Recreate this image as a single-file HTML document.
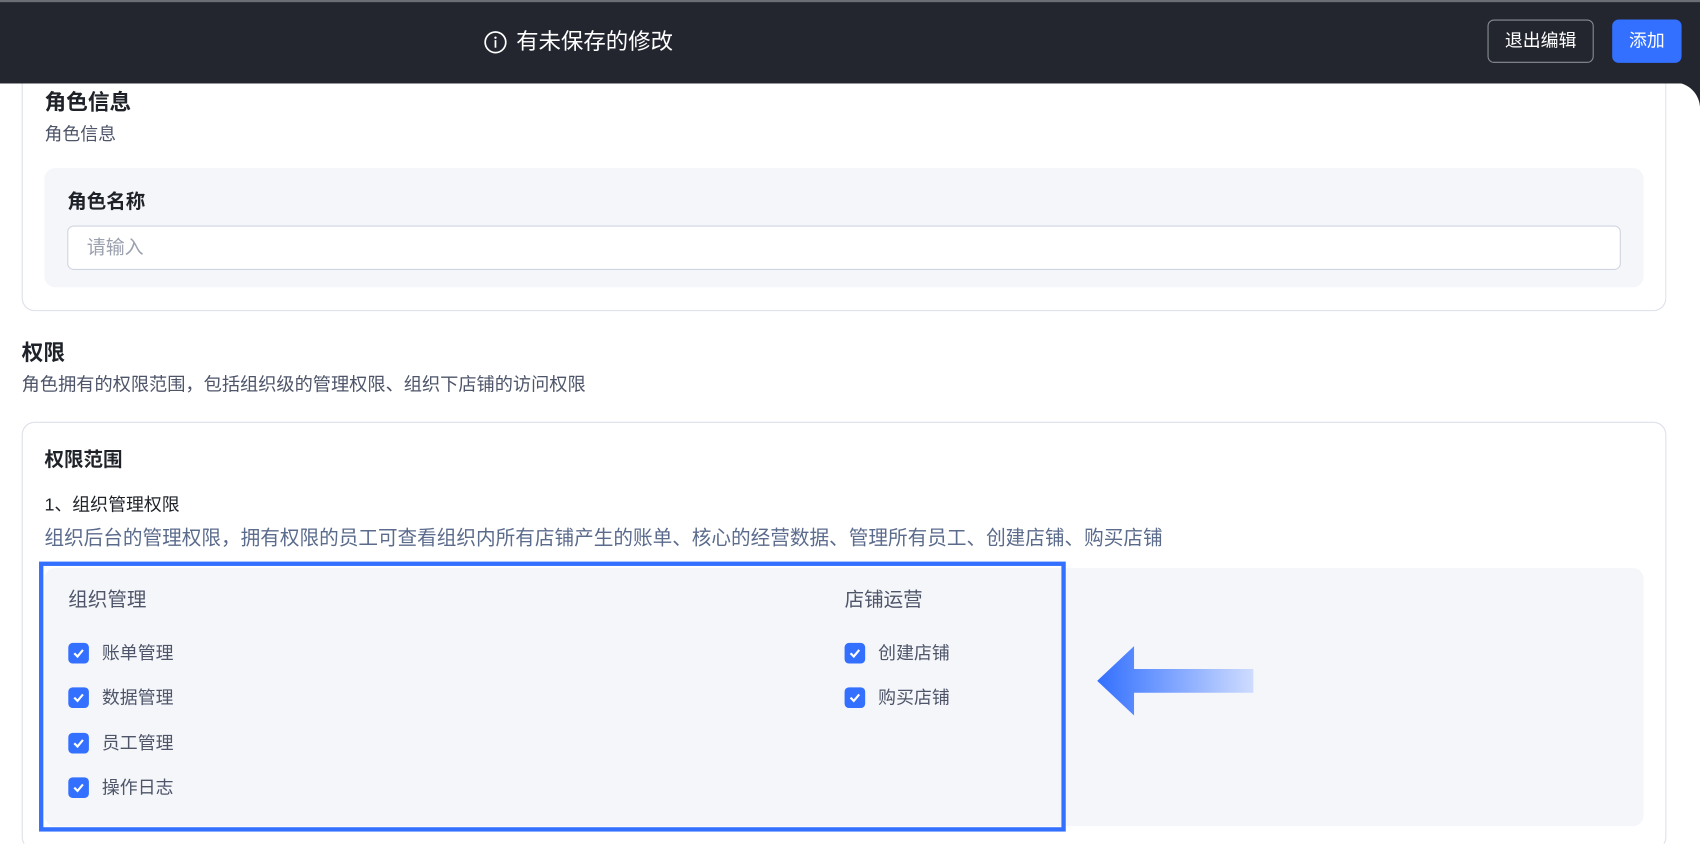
<!DOCTYPE html>
<html><head><meta charset="utf-8"><style>
*{box-sizing:border-box;margin:0;padding:0}
html,body{width:1700px;height:844px;overflow:hidden;background:#fff}
#w{position:absolute;left:0;top:0;width:1568px;height:778px;overflow:hidden;transform:scale(1.08418);transform-origin:0 0;font-family:"Liberation Sans","Noto Sans CJK SC",sans-serif;color:#1f2329}
.a{position:absolute;white-space:nowrap}
.cb{position:absolute;width:19px;height:19px;border-radius:4px;background:#3370ff}
.cb svg{position:absolute;left:3px;top:3px}
.lb{position:absolute;font-size:16.5px;color:#4e5569;line-height:22px}
</style></head><body><div id="w">
<div class="a" style="left:1540px;top:70px;width:28px;height:28px;background:#23262f"></div>
<div class="a" style="left:20px;top:40px;width:1517px;height:247px;border:1px solid #dde0ea;border-radius:12px;background:#fff"></div>
<div class="a" style="left:1537px;top:76px;width:31px;height:700px;background:#fff;border-top-right-radius:24px"></div>
<div class="a" style="left:0;top:0;width:1568px;height:77px;background:#23262f;border-top:2px solid #6b6e75"></div>
<svg class="a" style="left:446px;top:28px" width="22" height="22" viewBox="0 0 22 22"><circle cx="11" cy="11" r="9.5" fill="none" stroke="#fff" stroke-width="1.6"/><circle cx="11" cy="6.8" r="1.1" fill="#fff"/><rect x="10.2" y="9" width="1.6" height="7" fill="#fff"/></svg>
<div class="a" style="left:476px;top:25px;font-size:20.7px;color:#fff;line-height:28px">有未保存的修改</div>
<div class="a" style="left:1372px;top:18px;width:98px;height:40px;border:1px solid #8a8d94;border-radius:6px;color:#fff;font-size:16.5px;line-height:38px;text-align:center">退出编辑</div>
<div class="a" style="left:1487px;top:18px;width:64px;height:40px;background:#3370ff;border-radius:6px;color:#fff;font-size:16.5px;line-height:40px;text-align:center">添加</div>
<div class="a" style="left:41px;top:82px;font-size:20px;font-weight:bold;line-height:26px">角色信息</div>
<div class="a" style="left:41px;top:113px;font-size:16.5px;color:#4e5569;line-height:22px">角色信息</div>
<div class="a" style="left:41px;top:155px;width:1475px;height:110px;background:#f5f6fa;border-radius:10px"></div>
<div class="a" style="left:62px;top:174px;font-size:18px;font-weight:bold;line-height:24px">角色名称</div>
<div class="a" style="left:62px;top:208px;width:1433px;height:41px;border:1px solid #d0d4e0;border-radius:6px;background:#fff;font-size:17.5px;color:#9aa0ae;padding-left:17px;line-height:39px">请输入</div>
<div class="a" style="left:20px;top:313px;font-size:20px;font-weight:bold;line-height:26px">权限</div>
<div class="a" style="left:20px;top:344px;font-size:16.8px;color:#4e5569;line-height:22px">角色拥有的权限范围，包括组织级的管理权限、组织下店铺的访问权限</div>
<div class="a" style="left:20px;top:389px;width:1517px;height:395px;border:1px solid #dde0ea;border-radius:12px"></div>
<div class="a" style="left:41px;top:412px;font-size:18px;font-weight:bold;line-height:24px">权限范围</div>
<div class="a" style="left:41px;top:455px;font-size:16.5px;line-height:22px">1、组织管理权限</div>
<div class="a" style="left:41px;top:485px;font-size:18.1px;color:#5b6b8c;line-height:22px">组织后台的管理权限，拥有权限的员工可查看组织内所有店铺产生的账单、核心的经营数据、管理所有员工、创建店铺、购买店铺</div>
<div class="a" style="left:41px;top:524px;width:1475px;height:238px;background:#f5f6fa;border-radius:10px"></div>
<div class="a" style="left:36px;top:518px;width:947px;height:249px;border:4px solid #3370ff"></div>
<div class="a" style="left:63px;top:541px;font-size:18px;color:#4e5569;line-height:24px">组织管理</div>
<div class="a" style="left:779px;top:541px;font-size:18px;color:#4e5569;line-height:24px">店铺运营</div>
<div class="cb" style="left:63px;top:593px"><svg width="13" height="13" viewBox="0 0 13 13"><path d="M2.5 6.5l3 3 5-6" fill="none" stroke="#fff" stroke-width="2"/></svg></div>
<div class="lb" style="left:94px;top:592px">账单管理</div>
<div class="cb" style="left:63px;top:634px"><svg width="13" height="13" viewBox="0 0 13 13"><path d="M2.5 6.5l3 3 5-6" fill="none" stroke="#fff" stroke-width="2"/></svg></div>
<div class="lb" style="left:94px;top:633px">数据管理</div>
<div class="cb" style="left:63px;top:676px"><svg width="13" height="13" viewBox="0 0 13 13"><path d="M2.5 6.5l3 3 5-6" fill="none" stroke="#fff" stroke-width="2"/></svg></div>
<div class="lb" style="left:94px;top:675px">员工管理</div>
<div class="cb" style="left:63px;top:717px"><svg width="13" height="13" viewBox="0 0 13 13"><path d="M2.5 6.5l3 3 5-6" fill="none" stroke="#fff" stroke-width="2"/></svg></div>
<div class="lb" style="left:94px;top:716px">操作日志</div>
<div class="cb" style="left:779px;top:593px"><svg width="13" height="13" viewBox="0 0 13 13"><path d="M2.5 6.5l3 3 5-6" fill="none" stroke="#fff" stroke-width="2"/></svg></div>
<div class="lb" style="left:810px;top:592px">创建店铺</div>
<div class="cb" style="left:779px;top:634px"><svg width="13" height="13" viewBox="0 0 13 13"><path d="M2.5 6.5l3 3 5-6" fill="none" stroke="#fff" stroke-width="2"/></svg></div>
<div class="lb" style="left:810px;top:633px">购买店铺</div>
<svg class="a" style="left:1010px;top:594px" width="150" height="70" viewBox="0 0 150 70"><defs><linearGradient id="g" x1="0" x2="1"><stop offset="0" stop-color="#3370ff"/><stop offset="1" stop-color="#cfdcff"/></linearGradient></defs><path d="M2 34L36 2V23H146V45H36V66Z" fill="url(#g)"/></svg>
</div></body></html>
